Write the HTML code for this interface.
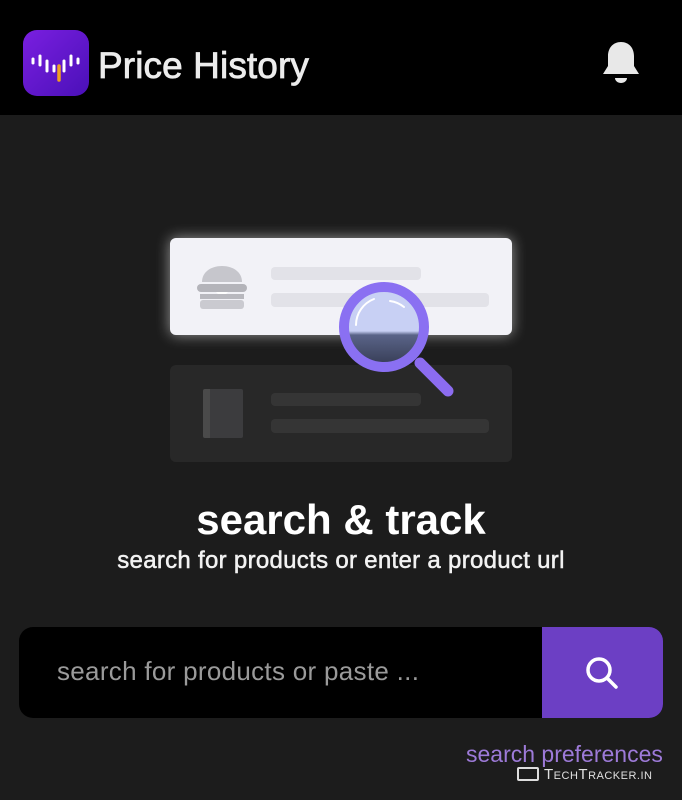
<!DOCTYPE html>
<html><head><meta charset="utf-8"><style>
*{margin:0;padding:0;box-sizing:border-box}
body{width:682px;height:800px;background:#1c1c1c;font-family:"Liberation Sans",sans-serif;position:relative;overflow:hidden;color:#fff}
.hdr{position:absolute;left:0;top:0;width:682px;height:115px;background:#000}
.logo{position:absolute;left:23px;top:30px;width:66px;height:66px;border-radius:14px;background:linear-gradient(135deg,#7a1fe0,#4a10b8)}
.title{position:absolute;left:98px;top:45px;font-size:37px;color:#ececec;letter-spacing:0.1px;-webkit-text-stroke:0.8px #ececec}
.abs{position:absolute}
</style></head><body>
<div class="hdr"></div>
<div class="logo"><svg width="66" height="66" viewBox="0 0 66 66">
<g stroke="#fff" stroke-width="3" stroke-linecap="round">
<line x1="10" y1="29" x2="10" y2="33"/><line x1="17" y1="26" x2="17" y2="35"/><line x1="24" y1="31" x2="24" y2="41"/>
<line x1="41" y1="31" x2="41" y2="41"/><line x1="48" y1="26" x2="48" y2="35"/><line x1="55" y1="29" x2="55" y2="33"/>
<line x1="31" y1="36" x2="31" y2="41"/></g>
<line x1="36" y1="36" x2="36" y2="50" stroke="#f0a020" stroke-width="3.5" stroke-linecap="round"/>
</svg></div>
<div class="title">Price History</div>
<svg class="abs" style="left:600px;top:40px" width="42" height="46" viewBox="0 0 42 46">
<path d="M21 2c-8 0-13 6-13 14v10l-5 8h36l-5-8V16C34 8 29 2 21 2z" fill="#e8e8e8"/>
<path d="M15 38h12c0 3-3 5-6 5s-6-2-6-5z" fill="#e8e8e8"/>
</svg>
<div class="abs" style="left:170px;top:238px;width:342px;height:97px;background:#f2f2f7;border-radius:6px;box-shadow:0 0 14px rgba(255,255,255,0.55)"></div>
<div class="abs" style="left:271px;top:267px;width:150px;height:13px;background:#e2e2e8;border-radius:4px"></div>
<div class="abs" style="left:271px;top:293px;width:218px;height:14px;background:#e2e2e8;border-radius:4px"></div>
<svg class="abs" style="left:196px;top:262px" width="52" height="50" viewBox="0 0 52 50">
<path d="M6 20c0-10 9-16 20-16s20 6 20 16z" fill="#c6c6cc"/>
<rect x="1" y="22" width="50" height="8" rx="4" fill="#b4b4ba"/>
<path d="M20 30l6 6 6-6z" fill="#fff"/>
<rect x="4" y="32" width="44" height="5" fill="#b8b8be"/>
<rect x="4" y="38" width="44" height="9" rx="3" fill="#cacad0"/>
</svg>
<div class="abs" style="left:170px;top:365px;width:342px;height:97px;background:#282828;border-radius:6px"></div>
<div class="abs" style="left:271px;top:393px;width:150px;height:13px;background:#353535;border-radius:4px"></div>
<div class="abs" style="left:271px;top:419px;width:218px;height:14px;background:#353535;border-radius:4px"></div>
<div class="abs" style="left:203px;top:389px;width:40px;height:49px;background:#3c3c3e;border-radius:2px;border-left:7px solid #4a4a4a"></div>
<svg class="abs" style="left:330px;top:275px" width="130" height="130" viewBox="0 0 130 130">
<defs><linearGradient id="g" x1="0" y1="0" x2="0" y2="1"><stop offset="0.55" stop-color="#c8d0f4"/><stop offset="0.6" stop-color="#5a6488"/><stop offset="1" stop-color="#343a52"/></linearGradient></defs>
<line x1="90" y1="88" x2="118" y2="116" stroke="#8c6cf0" stroke-width="11" stroke-linecap="round"/>
<circle cx="54" cy="52" r="40" fill="url(#g)" stroke="#8a70f2" stroke-width="10"/>
<path d="M26 50a28 28 0 0 1 18-26" stroke="#fff" stroke-width="2" fill="none" stroke-linecap="round"/>
<path d="M60 26a28 28 0 0 1 14 6" stroke="#fff" stroke-width="2" fill="none" stroke-linecap="round"/>
</svg>
<div class="abs" style="left:0;width:682px;top:496px;text-align:center;font-size:42px;font-weight:bold">search &amp; track</div>
<div class="abs" style="left:0;width:682px;top:547px;text-align:center;font-size:24px;color:#f2f2f2;letter-spacing:0.3px;-webkit-text-stroke:0.5px #f2f2f2">search for products or enter a product url</div>
<div class="abs" style="left:19px;top:627px;width:644px;height:91px;background:#000;border-radius:14px;overflow:hidden">
<div class="abs" style="left:38px;top:29px;font-size:26px;color:#9a9a9a;letter-spacing:0.3px">search for products or paste ...</div>
<div class="abs" style="left:523px;top:0;width:121px;height:91px;background:#6c3fc4">
<svg class="abs" style="left:42px;top:28px" width="36" height="36" viewBox="0 0 36 36"><circle cx="15" cy="15" r="11" fill="none" stroke="#fff" stroke-width="3.5"/><line x1="23" y1="23" x2="32" y2="32" stroke="#fff" stroke-width="3.5" stroke-linecap="round"/></svg>
</div></div>
<div class="abs" style="left:466px;top:741px;font-size:23px;color:#9d7ad8">search preferences</div>
<div class="abs" style="left:517px;top:767px;width:22px;height:14px;border:2px solid #ddd;border-radius:2px"></div>
<div class="abs" style="left:544px;top:766px;font-size:15px;color:#e0e0e0;letter-spacing:0.5px">T<span style="font-size:11px">ECH</span>T<span style="font-size:11px">RACKER.IN</span></div>
</body></html>
